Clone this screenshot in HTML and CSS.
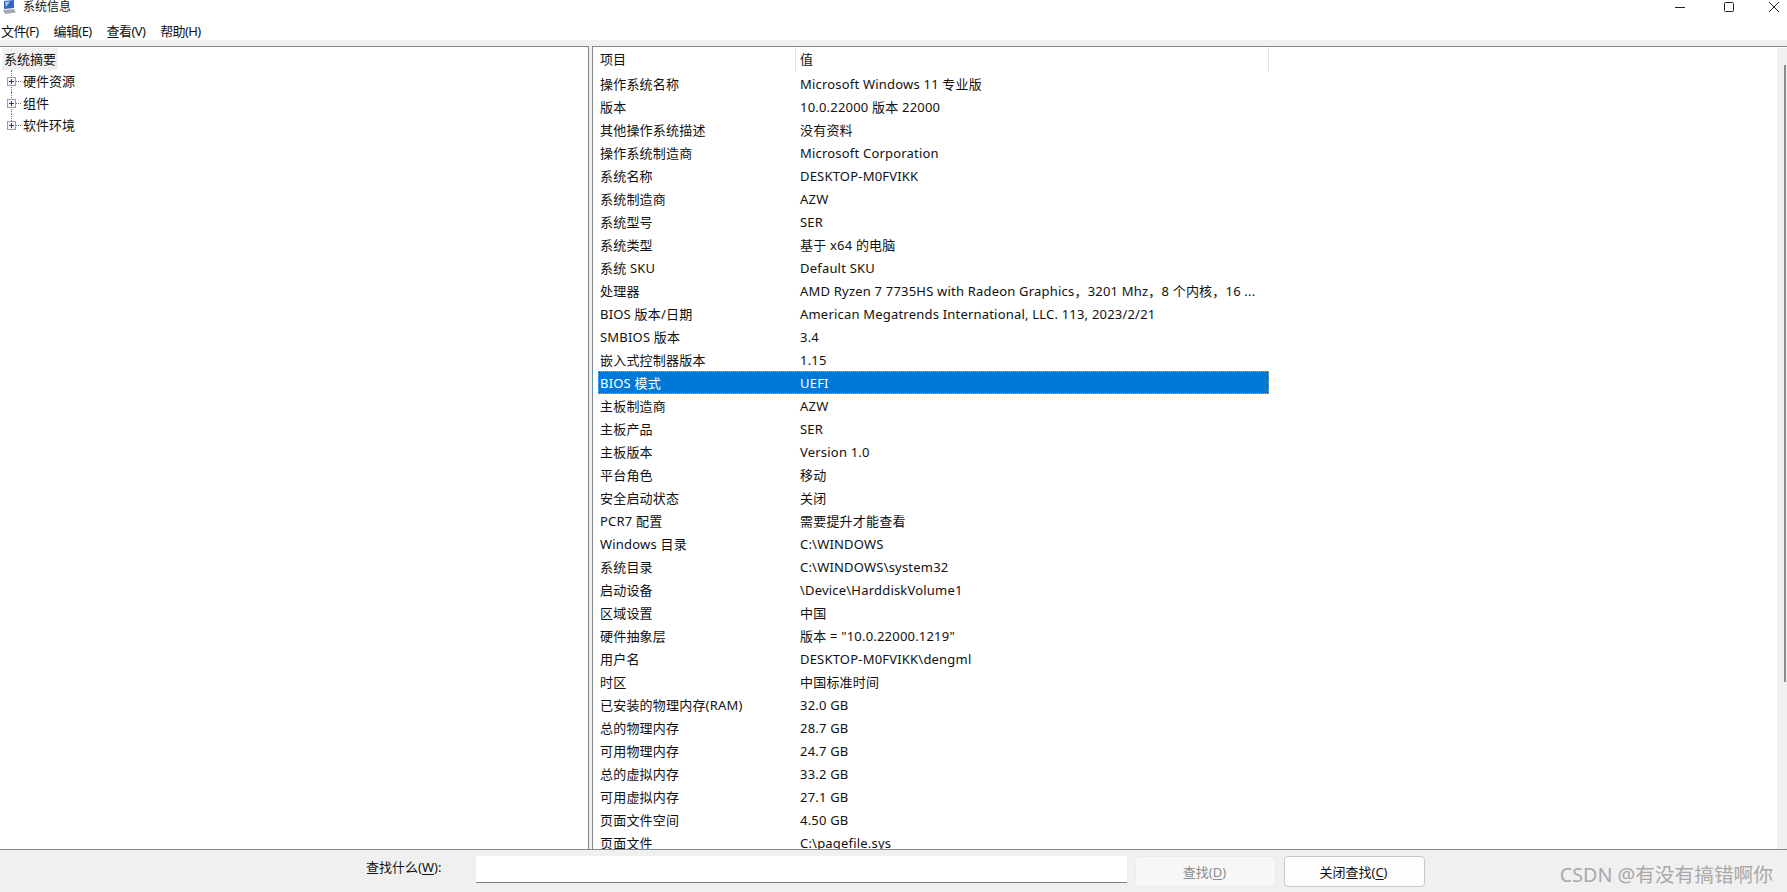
FILE: index.html
```html
<!DOCTYPE html>
<html lang="zh-CN">
<head>
<meta charset="UTF-8">
<title>系统信息</title>
<link rel="stylesheet" href="styles.css">
</head>
<body>
<div class="app">
    <div class="titlebar">
        <svg class="app-icon" width="14" height="14" viewBox="0 0 14 14">
            <path d="M2 1 L12 0 L12 8 L2 9 Z" fill="#2f66c0"/>
            <path d="M3 2 L8 1.5 L4 7 Z" fill="#a5c9f0"/>
            <path d="M1 10 L12 9 L14 12.5 L3 14 Z" fill="#a3a7ad"/>
        </svg>
        <span class="app-title">系统信息</span>
        <div class="win-buttons">
            <svg class="win-min" width="12" height="12" viewBox="0 0 12 12"><path d="M1 6.5 H11" stroke="#222" fill="none"/></svg>
            <svg class="win-max" width="12" height="12" viewBox="0 0 12 12"><rect x="1.5" y="1.5" width="9" height="9" rx="1" stroke="#222" fill="none"/></svg>
            <svg class="win-close" width="12" height="12" viewBox="0 0 12 12"><path d="M1 1 L11 11 M11 1 L1 11" stroke="#222" fill="none"/></svg>
        </div>
    </div>
    <div class="menubar">
        <span>文件(F)</span>
        <span>编辑(E)</span>
        <span>查看(V)</span>
        <span>帮助(H)</span>
    </div>
    <div class="panes">
        <div class="tree">
            <div class="tree-root">系统摘要</div>
            <div class="tree-item"><span class="plus"></span><span class="stub"></span><span class="tree-label">硬件资源</span></div>
            <div class="tree-item"><span class="plus"></span><span class="stub"></span><span class="tree-label">组件</span></div>
            <div class="tree-item last"><span class="plus"></span><span class="stub"></span><span class="tree-label">软件环境</span></div>
        </div>
        <div class="details">
            <div class="list">
                <div class="row head"><div class="key">项目</div><div class="val">值</div></div>
                <div class="row"><div class="key">操作系统名称</div><div class="val">Microsoft Windows 11 专业版</div></div>
                <div class="row"><div class="key">版本</div><div class="val">10.0.22000 版本 22000</div></div>
                <div class="row"><div class="key">其他操作系统描述</div><div class="val">没有资料</div></div>
                <div class="row"><div class="key">操作系统制造商</div><div class="val">Microsoft Corporation</div></div>
                <div class="row"><div class="key">系统名称</div><div class="val">DESKTOP-M0FVIKK</div></div>
                <div class="row"><div class="key">系统制造商</div><div class="val">AZW</div></div>
                <div class="row"><div class="key">系统型号</div><div class="val">SER</div></div>
                <div class="row"><div class="key">系统类型</div><div class="val">基于 x64 的电脑</div></div>
                <div class="row"><div class="key">系统 SKU</div><div class="val">Default SKU</div></div>
                <div class="row"><div class="key">处理器</div><div class="val">AMD Ryzen 7 7735HS with Radeon Graphics，3201 Mhz，8 个内核，16 ...</div></div>
                <div class="row"><div class="key">BIOS 版本/日期</div><div class="val">American Megatrends International, LLC. 113, 2023/2/21</div></div>
                <div class="row"><div class="key">SMBIOS 版本</div><div class="val">3.4</div></div>
                <div class="row"><div class="key">嵌入式控制器版本</div><div class="val">1.15</div></div>
                <div class="row selected"><div class="key">BIOS 模式</div><div class="val">UEFI</div></div>
                <div class="row"><div class="key">主板制造商</div><div class="val">AZW</div></div>
                <div class="row"><div class="key">主板产品</div><div class="val">SER</div></div>
                <div class="row"><div class="key">主板版本</div><div class="val">Version 1.0</div></div>
                <div class="row"><div class="key">平台角色</div><div class="val">移动</div></div>
                <div class="row"><div class="key">安全启动状态</div><div class="val">关闭</div></div>
                <div class="row"><div class="key">PCR7 配置</div><div class="val">需要提升才能查看</div></div>
                <div class="row"><div class="key">Windows 目录</div><div class="val">C:\WINDOWS</div></div>
                <div class="row"><div class="key">系统目录</div><div class="val">C:\WINDOWS\system32</div></div>
                <div class="row"><div class="key">启动设备</div><div class="val">\Device\HarddiskVolume1</div></div>
                <div class="row"><div class="key">区域设置</div><div class="val">中国</div></div>
                <div class="row"><div class="key">硬件抽象层</div><div class="val">版本 = "10.0.22000.1219"</div></div>
                <div class="row"><div class="key">用户名</div><div class="val">DESKTOP-M0FVIKK\dengml</div></div>
                <div class="row"><div class="key">时区</div><div class="val">中国标准时间</div></div>
                <div class="row"><div class="key">已安装的物理内存(RAM)</div><div class="val">32.0 GB</div></div>
                <div class="row"><div class="key">总的物理内存</div><div class="val">28.7 GB</div></div>
                <div class="row"><div class="key">可用物理内存</div><div class="val">24.7 GB</div></div>
                <div class="row"><div class="key">总的虚拟内存</div><div class="val">33.2 GB</div></div>
                <div class="row"><div class="key">可用虚拟内存</div><div class="val">27.1 GB</div></div>
                <div class="row"><div class="key">页面文件空间</div><div class="val">4.50 GB</div></div>
                <div class="row"><div class="key">页面文件</div><div class="val">C:\pagefile.sys</div></div>
            </div>
            <div class="scrollbar"><div class="thumb"></div></div>
        </div>
    </div>
    <div class="findbar">
        <label class="find-label">查找什么(<u>W</u>):</label>
        <div class="find-input"></div>
        <button class="btn disabled">查找(<u>D</u>)</button>
        <button class="btn">关闭查找(<u>C</u>)</button>
        <span class="watermark">CSDN @有没有搞错啊你</span>
    </div>
</div>
</body>
</html>
```
FILE: styles.css
```css
html, body {
    margin: 0;
    height: 100%;
    overflow: hidden;
}

body {
    font-family: "Noto Sans", "Noto Sans CJK SC", sans-serif;
    font-size: 13px;
    color: #111;
    background-color: #f0f0f0;
}

.app {
    display: flex;
    flex-direction: column;
    height: 892px;
}

.titlebar {
    display: flex;
    align-items: center;
    height: 14px;
    padding-left: 2px;
    background-color: #fff;
}

.app-icon {
    margin-right: 7px;
}

.app-title {
    font-size: 12px;
    line-height: 14px;
}

.win-buttons {
    display: flex;
    margin-left: auto;
    margin-right: 7px;
}

.win-max {
    margin-left: 37px;
}

.win-close {
    margin-left: 33px;
}

.menubar {
    display: flex;
    gap: 15px;
    align-items: center;
    height: 26px;
    padding: 6px 0 0 1px;
    box-sizing: border-box;
    background-color: #fff;
    font-size: 13px;
    letter-spacing: -0.6px;
}

.panes {
    display: flex;
    gap: 3px;
    height: 803px;
    margin-top: 6px;
    overflow: hidden;
}

.tree {
    width: 589px;
    padding: 1px 0 0 2px;
    box-sizing: border-box;
    background-color: #fff;
    border-top: 1px solid #82878c;
    border-right: 1px solid #82878c;
}

.tree-root {
    display: inline-block;
    padding: 0 2px;
    height: 22px;
    line-height: 22px;
    background-color: #f0f0f0;
    vertical-align: top;
}

.tree-item {
    position: relative;
    display: flex;
    align-items: center;
    height: 22px;
    margin-left: 5px;
}

/* dotted branch line of the tree */
.tree-item::before {
    content: "";
    position: absolute;
    left: 4px;
    top: 0;
    bottom: 0;
    border-left: 1px dotted #707070;
}

.tree-item.last::before {
    bottom: 11px;
}

.tree-label {
    margin-bottom: 2px;
}

.plus {
    position: relative;
    z-index: 1;
    width: 9px;
    height: 9px;
    border: 1px solid #9a9fa8;
    box-sizing: border-box;
    background-color: #f6f6f6;
}

.plus::before {
    content: "";
    position: absolute;
    left: 1px;
    top: 3px;
    width: 5px;
    height: 1px;
    background-color: #2c3a78;
}

.plus::after {
    content: "";
    position: absolute;
    left: 3px;
    top: 1px;
    width: 1px;
    height: 5px;
    background-color: #2c3a78;
}

.stub {
    width: 5px;
    margin: 0 2px 0 0;
    border-top: 1px dotted #707070;
}

.details {
    flex: 1;
    display: flex;
    background-color: #fff;
    border-top: 1px solid #82878c;
    border-left: 1px solid #82878c;
    overflow: hidden;
}

.list {
    flex: 1;
    padding-left: 5px;
    overflow: hidden;
}

.row {
    display: flex;
    width: 671px;
    height: 23px;
    line-height: 25px;
    white-space: nowrap;
    letter-spacing: 0.2px;
}

.row.head {
    height: 25px;
    line-height: 25px;
    margin-top: 0;
    letter-spacing: 0;
}

.row.head .val {
    border-right: 1px solid #e5e5e5;
}

.row.head .key {
    border-right: 1px solid #e5e5e5;
}

.key {
    width: 198px;
    padding-left: 2px;
    box-sizing: border-box;
    overflow: hidden;
}

.val {
    flex: 1;
    padding-left: 4px;
    overflow: hidden;
}

.row.selected {
    background-color: #0078d7;
    color: #fff;
    outline: 1px dotted #c9a36a;
    outline-offset: -1px;
}

.scrollbar {
    width: 10px;
    margin-top: 1px;
    padding: 17px 1px 0 0;
    box-sizing: border-box;
    background-color: #f0f0f0;
    display: flex;
    justify-content: flex-end;
}

.thumb {
    width: 2px;
    height: 617px;
    background-color: #8a8a8a;
}

.findbar {
    flex: 1;
    display: flex;
    align-items: flex-start;
    border-top: 1px solid #82878c;
    padding-top: 6px;
    position: relative;
}

.find-label {
    width: 110px;
    margin-left: 366px;
    line-height: 22px;
}

.find-input {
    width: 651px;
    height: 27px;
    box-sizing: border-box;
    background-color: #fff;
    border-bottom: 1px solid #808080;
}

.btn {
    width: 141px;
    height: 31px;
    margin-left: 8px;
    font-family: inherit;
    font-size: 13px;
    color: #111;
    background-color: #fdfdfd;
    border: 1px solid #c8c8c8;
    border-radius: 4px;
    padding: 0 2px 0 0;
}

.btn.disabled {
    color: #8c8c8c;
    background-color: #f7f7f7;
    border-color: #eaeaea;
}

.watermark {
    position: absolute;
    right: 14px;
    top: 9px;
    font-size: 19.7px;
    color: #a8a8a8;
}

u {
    text-underline-offset: 2px;
}
```
